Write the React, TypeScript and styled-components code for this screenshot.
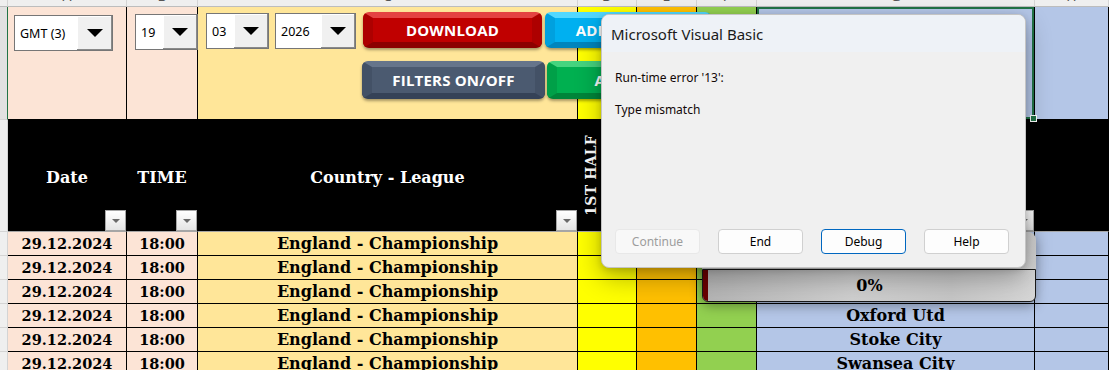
import React from 'react';
import styled, { createGlobalStyle } from 'styled-components';

const GRID = '8px 119px 71px 380px 59px 60px 60px 278px 1fr';
const CELL_FONT = '"DejaVu Serif", "Liberation Serif", serif';
const UI_FONT = '"Noto Sans", "Open Sans", sans-serif';
const BUTTON_FONT = '"Open Sans", "Noto Sans", sans-serif';

type Tone = { face: string; light: string; dark: string; side: string };

const TONES: Record<string, Tone> = {
    red: { face: '#c00000', light: '#e44242', dark: '#8c0000', side: '#ad0000' },
    slate: { face: '#4b5a70', light: '#66758b', dark: '#354257', side: '#435166' },
    cyan: { face: '#00b0f0', light: '#52d8ff', dark: '#0085bd', side: '#00a0de' },
    green: { face: '#00b050', light: '#45d47f', dark: '#00853a', side: '#00a048' },
};

const COLUMNS = [
    { letter: 'A', bg: '#fce4d6' },
    { letter: 'B', bg: '#fce4d6' },
    { letter: 'C', bg: '#ffe699' },
    { letter: 'D', bg: '#ffff00' },
    { letter: 'E', bg: '#ffc000' },
    { letter: 'F', bg: '#92d050' },
    { letter: 'G', bg: '#b4c6e7' },
    { letter: 'H', bg: '#b4c6e7' },
];

const MATCHES = [
    { date: '29.12.2024', time: '18:00', league: 'England - Championship', team: '' },
    { date: '29.12.2024', time: '18:00', league: 'England - Championship', team: '' },
    { date: '29.12.2024', time: '18:00', league: 'England - Championship', team: '' },
    { date: '29.12.2024', time: '18:00', league: 'England - Championship', team: 'Oxford Utd' },
    { date: '29.12.2024', time: '18:00', league: 'England - Championship', team: 'Stoke City' },
    { date: '29.12.2024', time: '18:00', league: 'England - Championship', team: 'Swansea City' },
];

const GlobalStyle = createGlobalStyle`
    html, body {
        margin: 0;
        padding: 0;
        background: #ffffff;
        overflow: hidden;
    }
    * {
        box-sizing: border-box;
    }
`;

const Page = styled.div`
    position: relative;
    width: 1109px;
    height: 370px;
    overflow: hidden;
    font-family: ${UI_FONT};
`;

const Sheet = styled.div`
    display: flex;
    flex-direction: column;
`;

const SheetRow = styled.div<{ $h: number }>`
    display: grid;
    grid-template-columns: ${GRID};
    height: ${({ $h }) => $h}px;
    flex-shrink: 0;
`;

const ColumnHeading = styled.div<{ $col: number }>`
    grid-column: ${({ $col }) => $col};
    grid-row: 1;
    display: flex;
    justify-content: center;
    overflow: hidden;
    background: #efefef;
    border-right: 1px solid #d4d4d4;
    border-bottom: 1px solid #bdbdbd;
    font-size: 14px;
    line-height: 14px;
    color: #555;
`;

const HeadingLetter = styled.span`
    margin-top: -11px;
`;

const RowHead = styled.div<{ $selected?: boolean }>`
    grid-column: 1;
    grid-row: 1;
    background: ${({ $selected }) => ($selected ? '#e1e1e1' : '#efefef')};
    border-right: 1px solid ${({ $selected }) => ($selected ? '#217346' : '#d4d4d4')};
    border-bottom: 1px solid #d4d4d4;
`;

const Cell = styled.div<{ $col: number; $bg: string; $line?: string; $size?: number; $color?: string }>`
    grid-column: ${({ $col }) => $col};
    grid-row: 1;
    position: relative;
    display: flex;
    align-items: center;
    justify-content: center;
    background: ${({ $bg }) => $bg};
    border-right: 1px solid #000;
    border-bottom: 1px solid ${({ $line }) => $line ?? '#000'};
    font-family: ${CELL_FONT};
    font-weight: 700;
    font-size: ${({ $size }) => $size ?? 16}px;
    color: ${({ $color }) => $color ?? '#000'};
    white-space: nowrap;
`;

const HeaderCell = styled(Cell)`
    padding-top: 3px;
`;

const SelectedCell = styled(Cell)`
    box-shadow: inset 0 0 0 2px #217346;
`;

const FillHandle = styled.div`
    position: absolute;
    right: -3px;
    bottom: -3px;
    width: 7px;
    height: 7px;
    background: #217346;
    border: 1px solid #ffffff;
    z-index: 3;
`;

const SideLabelCell = styled(Cell)`
    justify-content: flex-start;
    padding-left: 5px;
`;

const VerticalLabel = styled.span`
    writing-mode: vertical-rl;
    transform: rotate(180deg);
    font-size: 14px;
    letter-spacing: 0.2px;
`;

const FilterButton = styled.div`
    position: absolute;
    right: 0;
    bottom: 0;
    width: 21px;
    height: 21px;
    display: flex;
    align-items: center;
    justify-content: center;
    background: linear-gradient(#ffffff, #e4e4e4);
    border: 1px solid #a6a6a6;

    &::after {
        content: '';
        border-left: 4px solid transparent;
        border-right: 4px solid transparent;
        border-top: 4px solid #6a6a6a;
    }
`;

const ControlsLayer = styled.div`
    grid-column: 2 / -1;
    grid-row: 1;
    display: flex;
    align-items: flex-start;
    z-index: 1;
`;

const Combo = styled.div<{ $w: number; $mt: number; $ml: number }>`
    display: flex;
    flex-shrink: 0;
    width: ${({ $w }) => $w}px;
    height: 36px;
    margin-top: ${({ $mt }) => $mt}px;
    margin-left: ${({ $ml }) => $ml}px;
    background: #ffffff;
    border: 1px solid #767676;
`;

const ComboValue = styled.span`
    flex: 1;
    align-self: center;
    padding-left: 5px;
    font-family: ${UI_FONT};
    font-size: 12.5px;
    color: #000;
`;

const ComboArrow = styled.div<{ $w: number }>`
    width: ${({ $w }) => $w}px;
    display: flex;
    align-items: center;
    justify-content: center;
    background: #f0f0f0;
    box-shadow: inset -1px -1px 0 #8a8a8a, inset 1px 1px 0 #ffffff;

    &::after {
        content: '';
        border-left: 8px solid transparent;
        border-right: 8px solid transparent;
        border-top: 8px solid #000;
    }
`;

const ButtonStack = styled.div`
    display: flex;
    flex-direction: column;
    gap: 13px;
    margin-left: 6px;
    margin-top: 5px;
    flex-shrink: 0;
`;

const ButtonRow = styled.div`
    display: flex;
    align-items: flex-start;
`;

const BevelButton = styled.div<{ $tone: Tone; $w: number; $h: number; $ml: number }>`
    flex-shrink: 0;
    width: ${({ $w }) => $w}px;
    height: ${({ $h }) => $h}px;
    margin-left: ${({ $ml }) => $ml}px;
    display: flex;
    align-items: center;
    justify-content: center;
    background: ${({ $tone }) => $tone.face};
    border-style: solid;
    border-width: 6px 10px 6px 10px;
    border-color: ${({ $tone }) => `${$tone.light} ${$tone.side} ${$tone.dark} ${$tone.side}`};
    border-radius: 6px;
    box-shadow: 0 2px 3px rgba(0, 0, 0, 0.35);
    font-family: ${BUTTON_FONT};
    font-weight: 700;
    font-size: 15px;
    color: #ffffff;
    letter-spacing: 0.2px;
    white-space: nowrap;
    overflow: hidden;
`;

const Dialog = styled.div`
    position: absolute;
    left: 601px;
    top: 14px;
    width: 425px;
    height: 254px;
    z-index: 10;
    display: flex;
    flex-direction: column;
    overflow: hidden;
    background: #f0f0f0;
    border: 1px solid #c4c4c4;
    border-radius: 8px;
    box-shadow: 0 10px 26px rgba(0, 0, 0, 0.3), 0 2px 6px rgba(0, 0, 0, 0.15);
`;

const TitleBar = styled.div`
    height: 37px;
    display: flex;
    align-items: center;
    padding-left: 9px;
    background: #eef2f7;
    font-size: 15px;
    color: #1a1a1a;
`;

const DialogBody = styled.div`
    flex: 1;
    display: flex;
    flex-direction: column;
    padding: 18px 14px 13px 13px;
`;

const Message = styled.div<{ $gap?: number }>`
    margin-top: ${({ $gap }) => $gap ?? 0}px;
    font-size: 12px;
    line-height: 16px;
    color: #120808;
`;

const DialogButtons = styled.div`
    display: flex;
    gap: 18px;
    margin-top: auto;
`;

const DialogButton = styled.div<{ $variant?: 'disabled' | 'default' }>`
    width: 85px;
    height: 25px;
    display: flex;
    align-items: center;
    justify-content: center;
    border-radius: 4px;
    font-size: 12px;
    background: ${({ $variant }) => ($variant === 'disabled' ? '#f8f8f8' : '#fdfdfd')};
    color: ${({ $variant }) => ($variant === 'disabled' ? '#9d9d9d' : '#000')};
    border: 1px solid
        ${({ $variant }) =>
            $variant === 'disabled' ? '#e8e8e8' : $variant === 'default' ? '#0067c0' : '#d0d0d0'};
`;

const ProgressPanel = styled.div`
    position: absolute;
    left: 702px;
    top: 232px;
    width: 334px;
    height: 70px;
    z-index: 9;
    display: flex;
    align-items: flex-end;
    background: linear-gradient(180deg, #cdcdcd, #dadada);
    border-radius: 8px;
    box-shadow: 0 4px 12px rgba(0, 0, 0, 0.35);
`;

const ProgressTrack = styled.div`
    flex: 1;
    height: 33px;
    display: flex;
    border: 1px solid #1a1a1a;
    border-radius: 0 0 6px 6px;
    overflow: hidden;
    background: linear-gradient(90deg, #b4b4b4, #cfcfcf 45%, #c6c6c6 75%, #d6d6d6);
`;

const ProgressFill = styled.div`
    width: 5px;
    background: #6a0000;
`;

const ProgressLabel = styled.div`
    flex: 1;
    display: flex;
    align-items: center;
    justify-content: center;
    padding-right: 4px;
    font-family: ${CELL_FONT};
    font-weight: 700;
    font-size: 16px;
    color: #000;
`;

export default function App() {
    return (
        <Page>
            <GlobalStyle />
            <Sheet>
                <SheetRow $h={7}>
                    <ColumnHeading $col={1} />
                    {COLUMNS.map((c, i) => (
                        <ColumnHeading key={c.letter} $col={i + 2}>
                            <HeadingLetter>{c.letter}</HeadingLetter>
                        </ColumnHeading>
                    ))}
                </SheetRow>

                <SheetRow $h={113}>
                    <RowHead $selected />
                    {COLUMNS.map((c, i) =>
                        c.letter === 'G' ? (
                            <SelectedCell key={c.letter} $col={i + 2} $bg={c.bg}>
                                <FillHandle />
                            </SelectedCell>
                        ) : (
                            <Cell key={c.letter} $col={i + 2} $bg={c.bg} />
                        ),
                    )}
                    <ControlsLayer>
                        <Combo $w={99} $mt={8} $ml={6}>
                            <ComboValue>GMT (3)</ComboValue>
                            <ComboArrow $w={35} />
                        </Combo>
                        <Combo $w={63} $mt={7} $ml={22}>
                            <ComboValue>19</ComboValue>
                            <ComboArrow $w={34} />
                        </Combo>
                        <Combo $w={63} $mt={6} $ml={8}>
                            <ComboValue>03</ComboValue>
                            <ComboArrow $w={34} />
                        </Combo>
                        <Combo $w={81} $mt={6} $ml={6}>
                            <ComboValue>2026</ComboValue>
                            <ComboArrow $w={34} />
                        </Combo>
                        <ButtonStack>
                            <ButtonRow>
                                <BevelButton $tone={TONES.red} $w={179} $h={36} $ml={1}>
                                    DOWNLOAD
                                </BevelButton>
                                <BevelButton $tone={TONES.cyan} $w={166} $h={36} $ml={3}>
                                    ADD LEAGUES
                                </BevelButton>
                            </ButtonRow>
                            <ButtonRow>
                                <BevelButton $tone={TONES.slate} $w={183} $h={38} $ml={0}>
                                    FILTERS ON/OFF
                                </BevelButton>
                                <BevelButton $tone={TONES.green} $w={164} $h={38} $ml={2}>
                                    ANALYZE
                                </BevelButton>
                            </ButtonRow>
                        </ButtonStack>
                    </ControlsLayer>
                </SheetRow>

                <SheetRow $h={112}>
                    <RowHead />
                    <HeaderCell $col={2} $bg="#000" $line="#a6a6a6" $color="#fff">
                        Date
                        <FilterButton />
                    </HeaderCell>
                    <HeaderCell $col={3} $bg="#000" $line="#a6a6a6" $color="#fff">
                        TIME
                        <FilterButton />
                    </HeaderCell>
                    <HeaderCell $col={4} $bg="#000" $line="#a6a6a6" $color="#fff">
                        Country - League
                        <FilterButton />
                    </HeaderCell>
                    <SideLabelCell $col={5} $bg="#000" $line="#a6a6a6" $color="#fff">
                        <VerticalLabel>1ST HALF</VerticalLabel>
                    </SideLabelCell>
                    <Cell $col={6} $bg="#000" $line="#a6a6a6" />
                    <Cell $col={7} $bg="#000" $line="#a6a6a6" />
                    <Cell $col={8} $bg="#000" $line="#a6a6a6">
                        <FilterButton />
                    </Cell>
                    <Cell $col={9} $bg="#000" $line="#a6a6a6" />
                </SheetRow>

                {MATCHES.map((m, r) => (
                    <SheetRow key={r} $h={24}>
                        <RowHead />
                        <Cell $col={2} $bg={COLUMNS[0].bg} $size={14.5}>
                            {m.date}
                        </Cell>
                        <Cell $col={3} $bg={COLUMNS[1].bg} $size={14.5}>
                            {m.time}
                        </Cell>
                        <Cell $col={4} $bg={COLUMNS[2].bg}>
                            {m.league}
                        </Cell>
                        <Cell $col={5} $bg={COLUMNS[3].bg} />
                        <Cell $col={6} $bg={COLUMNS[4].bg} />
                        <Cell $col={7} $bg={COLUMNS[5].bg} />
                        <Cell $col={8} $bg={COLUMNS[6].bg}>
                            {m.team}
                        </Cell>
                        <Cell $col={9} $bg={COLUMNS[7].bg} />
                    </SheetRow>
                ))}
            </Sheet>

            <ProgressPanel>
                <ProgressTrack>
                    <ProgressFill />
                    <ProgressLabel>0%</ProgressLabel>
                </ProgressTrack>
            </ProgressPanel>

            <Dialog>
                <TitleBar>Microsoft Visual Basic</TitleBar>
                <DialogBody>
                    <Message>Run-time error '13':</Message>
                    <Message $gap={16}>Type mismatch</Message>
                    <DialogButtons>
                        <DialogButton $variant="disabled">Continue</DialogButton>
                        <DialogButton>End</DialogButton>
                        <DialogButton $variant="default">Debug</DialogButton>
                        <DialogButton>Help</DialogButton>
                    </DialogButtons>
                </DialogBody>
            </Dialog>
        </Page>
    );
}
